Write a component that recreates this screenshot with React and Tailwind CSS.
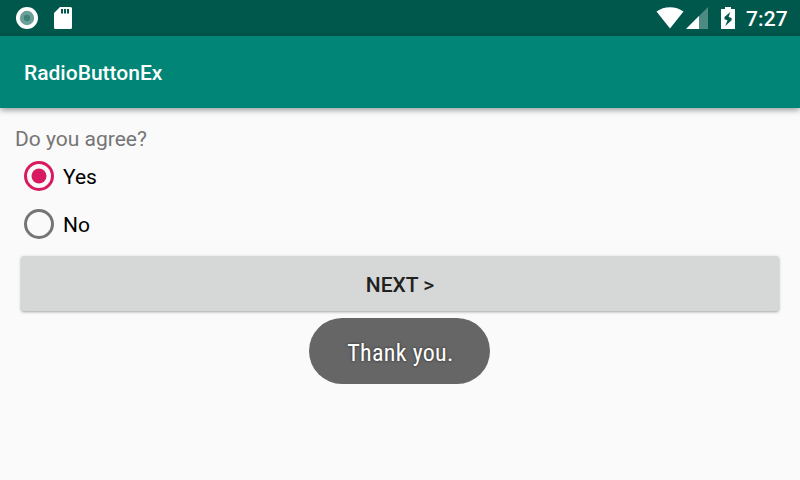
import React from "react";

function StatusBar() {
  return (
    <div className="flex h-9 items-center bg-[#00574b] text-white">
      <svg className="ml-4 h-[22px] w-[22px]" viewBox="0 0 22 22">
        <circle cx="11" cy="11" r="11" fill="#fff" />
        <circle cx="11" cy="11" r="7.2" fill="#6ba099" />
        <circle cx="11" cy="11" r="3.2" fill="#3d8378" />
      </svg>
      <svg className="ml-4 h-[22px] w-[18px]" viewBox="0 0 18 22">
        <path
          fillRule="evenodd"
          fill="#fff"
          d="M6 0H16.500a1.500 1.500 0 0 1 1.500 1.500V20.500a1.500 1.500 0 0 1-1.500 1.500H1.500a1.500 1.500 0 0 1-1.500-1.500V6ZM7 2V6.600H9V2ZM10 2V6.600H12V2ZM13 2V6.600H15V2Z"
        />
      </svg>
      <div className="flex-1" />
      <svg className="h-[22px] w-[28px]" viewBox="0 0 28 22">
        <path fill="#fff" d="M14 21.5 .5 4.6C4.4 1.7 9 .2 14 .2s9.600 1.500 13.500 4.400Z" />
      </svg>
      <svg className="ml-0.5 h-[22px] w-[22px]" viewBox="0 0 22 22">
        <path fill="#4d8a81" d="M22 0V22H0Z" />
        <path fill="#fff" d="M13 9V22H0Z" />
      </svg>
      <svg className="ml-[13px] h-[22px] w-[14px]" viewBox="0 0 14 22">
        <path
          fillRule="evenodd"
          fill="#fff"
          d="M4 0H10V2H13.500a.5.5 0 0 1 .5.5V21.500a.5.5 0 0 1-.5.5H.5a.5.5 0 0 1-.5-.5V2.500a.5.5 0 0 1 .5-.5H4ZM9.300 5 3.500 10V12.200L6.500 13.200 4.300 19 10.600 13.200V10.900L7.600 9.900Z"
        />
      </svg>
      <span className="ml-[11px] w-[54px] whitespace-nowrap pt-0.5 text-[21px] font-medium leading-6 tracking-[0.1px]">
        7:27
      </span>
    </div>
  );
}

function Radio({ label, checked }) {
  return (
    <div className="flex h-12 items-center pl-[9px]">
      <svg className="h-[30px] w-[30px]" viewBox="0 0 30 30">
        <circle
          cx="15"
          cy="15"
          r="13.5"
          fill="none"
          stroke={checked ? "#d81b60" : "#757575"}
          strokeWidth="3"
        />
        {checked && <circle cx="15" cy="15" r="7.5" fill="#d81b60" />}
      </svg>
      <span className="ml-[9px] pt-px text-[21px] leading-6 text-black">{label}</span>
    </div>
  );
}

export default function App() {
  return (
    <div className="flex h-[480px] w-[800px] flex-col overflow-hidden bg-[#fafafa] font-[Roboto,sans-serif]">
      <StatusBar />
      <header className="flex h-[72px] items-center bg-[#008577] pl-6 pt-[3px] text-[21px] font-medium text-white shadow-[0_2px_6px_rgba(0,0,0,0.4)]">
        RadioButtonEx
      </header>
      <main className="flex flex-col px-[15px] pt-[19px]">
        <p className="h-[25px] text-[21px] leading-6 text-[#757575]">Do you agree?</p>
        <Radio label="Yes" checked />
        <Radio label="No" />
        <button className="mx-1.5 mt-2 flex h-[55px] items-center justify-center rounded-[3px] bg-[#d6d8d7] pt-1 text-[21px] font-medium text-[#212121] shadow-[0_1px_3px_rgba(0,0,0,0.35)]">
          NEXT &gt;
        </button>
        <div className="ml-[294px] mt-[7px] flex h-[66px] w-[181px] items-center justify-center rounded-full bg-[#666666] pt-1 text-white">
          <span className="whitespace-nowrap pl-0.5 font-['Roboto_Condensed',Roboto,sans-serif] text-2xl tracking-[0.3px] [font-stretch:75%] [text-shadow:0_0_3px_rgba(0,0,0,0.6)]">
            Thank you.
          </span>
        </div>
      </main>
    </div>
  );
}
